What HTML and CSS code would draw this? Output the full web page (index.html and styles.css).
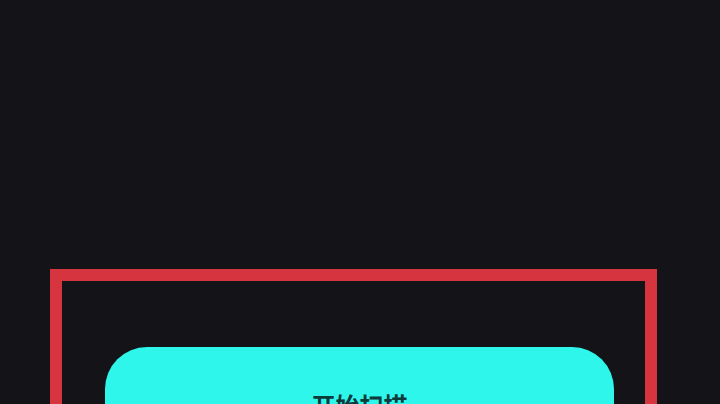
FILE: index.html
```html
<!DOCTYPE html>
<html lang="zh">
<head>
<meta charset="utf-8">
<title>开始扫描</title>
<link rel="stylesheet" href="styles.css">
</head>
<body>
<main class="screen">
  <section class="highlight">
    <div class="scan-btn" role="button">开始扫描</div>
  </section>
</main>
</body>
</html>
```
FILE: styles.css
```css
html, body {
  margin: 0;
  padding: 0;
  height: 404px;
  overflow: hidden;
  background: #141418;
}
.screen {
  padding: 269px 0 0 50px;
}
.highlight {
  box-sizing: border-box;
  width: 607px;
  border: 12px solid #d6343f;
  border-bottom: none;
  padding: 66px 31px 0 43px;
  height: 200px;
}
.scan-btn {
  box-sizing: border-box;
  height: 120px;
  border-radius: 42px;
  background: #2ff6ea;
  color: #0d3b3c;
  font-family: "Noto Sans CJK SC", "Noto Sans", sans-serif;
  font-size: 24px;
  font-weight: 700;
  line-height: 28px;
  padding: 44px 0 0 0;
  text-align: center;
}
```
